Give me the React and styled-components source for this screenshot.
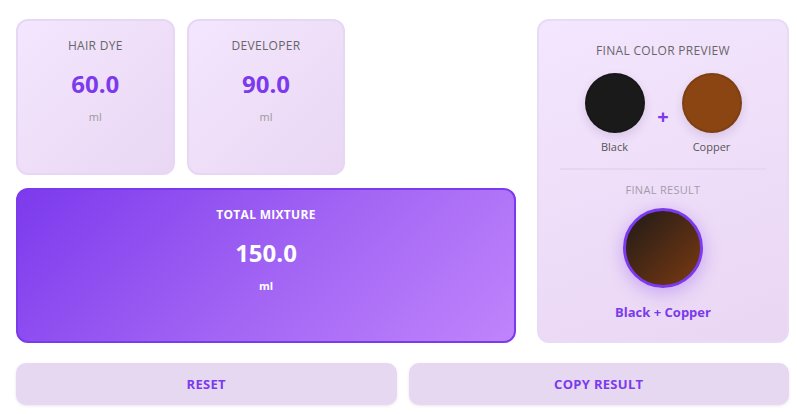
import React from "react";
import styled, { createGlobalStyle } from "styled-components";

const GlobalStyle = createGlobalStyle`
  body {
    margin: 0;
    background: #fff;
    font-family: "Open Sans", "Noto Sans", sans-serif;
  }
`;

const Page = styled.div`
  padding: 19px 8px 8px 16px;
`;

const Main = styled.div`
  display: grid;
  grid-template-columns: 500px 252px;
  column-gap: 21px;
`;

const Amounts = styled.div`
  display: grid;
  grid-template-columns: repeat(3, 1fr);
  grid-template-rows: 156px 155px;
  column-gap: 12px;
  row-gap: 13px;
`;

const Card = styled.div`
  box-sizing: border-box;
  display: flex;
  flex-direction: column;
  align-items: center;
  padding: 17px 12px;
  border-radius: 12px;
  border: 2px solid ${({ $total }) => ($total ? "#7c3aed" : "#e6d8f4")};
  background: ${({ $total }) =>
    $total
      ? "linear-gradient(135deg, #7c3aed 0%, #a366f4 55%, #c084fc 100%)"
      : "linear-gradient(135deg, #f4e6fe 0%, #e9d7f3 100%)"};
  grid-column: ${({ $total }) => ($total ? "1 / -1" : "auto")};
  color: ${({ $total }) => ($total ? "#fff" : "#666")};
`;

const Label = styled.div`
  font-size: 12px;
  line-height: 16px;
  font-weight: ${({ $total }) => ($total ? 700 : 500)};
  letter-spacing: 0.3px;
  text-transform: uppercase;
  color: ${({ $total }) => ($total ? "#fff" : "#666")};
`;

const Value = styled.div`
  margin-top: 14px;
  font-size: 24px;
  line-height: 32px;
  font-weight: 700;
  color: ${({ $total }) => ($total ? "#fff" : "#7c3aed")};
`;

const Unit = styled.div`
  margin-top: 9px;
  font-size: 11px;
  line-height: 15px;
  font-weight: ${({ $total }) => ($total ? 700 : 400)};
  color: ${({ $total }) => ($total ? "#fff" : "#999")};
`;

const Preview = styled.div`
  box-sizing: border-box;
  display: flex;
  flex-direction: column;
  align-items: center;
  padding: 22px 21px 20px;
  border-radius: 12px;
  border: 2px solid #e8dbf4;
  background: linear-gradient(160deg, #f4e6fe 0%, #e9d6f3 100%);
`;

const PreviewTitle = styled.div`
  font-size: 12px;
  line-height: 16px;
  font-weight: 500;
  letter-spacing: 0.3px;
  color: #666;
`;

const Swatches = styled.div`
  margin-top: 14px;
  display: flex;
  align-items: center;
  gap: 4px;
`;

const Swatch = styled.div`
  display: flex;
  flex-direction: column;
  align-items: center;
  width: 69px;
`;

const Circle = styled.div`
  box-sizing: border-box;
  width: 60px;
  height: 60px;
  border-radius: 50%;
  background: ${({ $color }) => $color};
  border: 2px solid rgba(0, 0, 0, 0.08);
  box-shadow: 0 4px 10px rgba(80, 40, 120, 0.15);
`;

const SwatchName = styled.div`
  margin-top: 6px;
  font-size: 11px;
  line-height: 15px;
  color: #555;
`;

const Plus = styled.div`
  margin-top: 6px;
  font-size: 20px;
  font-weight: 700;
  color: #7c3aed;
  width: 20px;
  text-align: center;
`;

const Divider = styled.div`
  align-self: stretch;
  height: 2px;
  margin-top: 14px;
  background: #e5d6f1;
`;

const ResultLabel = styled.div`
  margin-top: 12px;
  font-size: 11px;
  line-height: 15px;
  letter-spacing: 0.3px;
  color: #a59aa9;
`;

const ResultCircle = styled.div`
  box-sizing: border-box;
  margin-top: 11px;
  width: 80px;
  height: 80px;
  border-radius: 50%;
  border: 3px solid #7c3aed;
  background: linear-gradient(135deg, #1f1a18 0%, #4d2a14 50%, #7a3a12 100%);
  box-shadow: 0 4px 18px rgba(124, 58, 237, 0.35);
`;

const ResultName = styled.div`
  margin-top: 15px;
  font-size: 13px;
  line-height: 18px;
  font-weight: 700;
  color: #7c3aed;
`;

const Actions = styled.div`
  margin-top: 20px;
  display: grid;
  grid-template-columns: 1fr 1fr;
  gap: 12px;
`;

const Button = styled.button`
  height: 42px;
  border: none;
  border-radius: 10px;
  background: #e6d8f0;
  color: #7c3aed;
  font-family: inherit;
  font-size: 13px;
  font-weight: 700;
  letter-spacing: 0.3px;
  box-shadow: 0 1px 3px rgba(80, 40, 120, 0.12);
  cursor: pointer;
`;

const amounts = [
  { label: "Hair Dye", value: "60.0" },
  { label: "Developer", value: "90.0" },
];

export default function App() {
  return (
    <Page>
      <GlobalStyle />
      <Main>
        <Amounts>
          {amounts.map((a) => (
            <Card key={a.label}>
              <Label>{a.label}</Label>
              <Value>{a.value}</Value>
              <Unit>ml</Unit>
            </Card>
          ))}
          <Card $total>
            <Label $total>Total Mixture</Label>
            <Value $total>150.0</Value>
            <Unit $total>ml</Unit>
          </Card>
        </Amounts>
        <Preview>
          <PreviewTitle>FINAL COLOR PREVIEW</PreviewTitle>
          <Swatches>
            <Swatch>
              <Circle $color="#1a1a1a" />
              <SwatchName>Black</SwatchName>
            </Swatch>
            <Plus>+</Plus>
            <Swatch>
              <Circle $color="#8b4513" />
              <SwatchName>Copper</SwatchName>
            </Swatch>
          </Swatches>
          <Divider />
          <ResultLabel>FINAL RESULT</ResultLabel>
          <ResultCircle />
          <ResultName>Black + Copper</ResultName>
        </Preview>
      </Main>
      <Actions>
        <Button>RESET</Button>
        <Button>COPY RESULT</Button>
      </Actions>
    </Page>
  );
}
